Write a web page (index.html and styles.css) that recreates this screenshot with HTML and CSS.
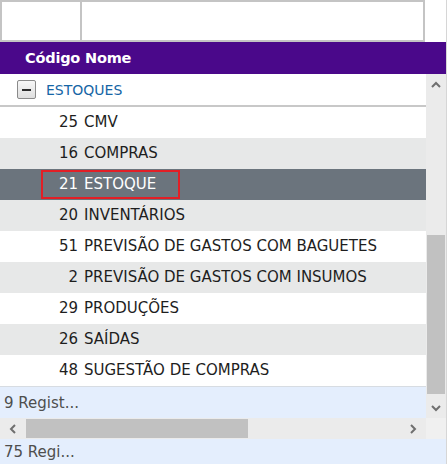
FILE: index.html
```html
<!DOCTYPE html>
<html lang="pt-BR">
<head>
    <meta charset="UTF-8">
    <title>Grupos de Produto</title>
    <link rel="stylesheet" href="styles.css">
</head>
<body>
    <div class="grid">
        <div class="filter-row">
            <div class="filter-cell code"></div>
            <div class="filter-cell name"></div>
        </div>
        <div class="header">Código Nome</div>

        <div class="middle">
            <div class="content">
                <div class="group-row">
                    <span class="toggle"><span class="dash"></span></span>
                    <span class="group-title">ESTOQUES</span>
                </div>
                <div class="row"><span class="code">25</span><span class="name">CMV</span></div>
                <div class="row alt"><span class="code">16</span><span class="name">COMPRAS</span></div>
                <div class="row selected"><span class="focus"><span class="code">21</span><span class="name">ESTOQUE</span></span></div>
                <div class="row alt"><span class="code">20</span><span class="name">INVENTÁRIOS</span></div>
                <div class="row"><span class="code">51</span><span class="name">PREVISÃO DE GASTOS COM BAGUETES</span></div>
                <div class="row alt"><span class="code">2</span><span class="name">PREVISÃO DE GASTOS COM INSUMOS</span></div>
                <div class="row"><span class="code">29</span><span class="name">PRODUÇÕES</span></div>
                <div class="row alt"><span class="code">26</span><span class="name">SAÍDAS</span></div>
                <div class="row"><span class="code">48</span><span class="name">SUGESTÃO DE COMPRAS</span></div>
                <div class="footer">9 Regist...</div>
            </div>
            <div class="vscroll">
                <div class="arrow">
                    <svg width="12" height="8" viewBox="0 0 12 8"><path d="M2 6 L6 2 L10 6" fill="none" stroke="#6f6f6f" stroke-width="2"/></svg>
                </div>
                <div class="track"><div class="thumb"></div></div>
                <div class="arrow">
                    <svg width="12" height="8" viewBox="0 0 12 8"><path d="M2 2 L6 6 L10 2" fill="none" stroke="#6f6f6f" stroke-width="2"/></svg>
                </div>
            </div>
        </div>

        <div class="hscroll-row">
            <div class="hscroll">
                <div class="harrow">
                    <svg width="8" height="12" viewBox="0 0 8 12"><path d="M6 2 L2 6 L6 10" fill="none" stroke="#6f6f6f" stroke-width="2"/></svg>
                </div>
                <div class="htrack"><div class="hthumb"></div></div>
                <div class="harrow">
                    <svg width="8" height="12" viewBox="0 0 8 12"><path d="M2 2 L6 6 L2 10" fill="none" stroke="#6f6f6f" stroke-width="2"/></svg>
                </div>
            </div>
            <div class="corner"></div>
        </div>
        <div class="footer total">75 Regi...</div>
    </div>
</body>
</html>
```

FILE: styles.css
```css
body { margin: 0; background: #fff; font-family: "DejaVu Sans", sans-serif; }

.grid { width: 447px; height: 464px; box-sizing: border-box; border-right: 1px solid #d6d6d6; display: flex; flex-direction: column; overflow: hidden; }

.filter-row { display: flex; height: 42px; }
.filter-cell { box-sizing: border-box; border: 2px solid #c4c4c4; border-right-width: 1px; border-left-width: 0; height: 42px; }
.filter-cell.code { width: 82px; border-left-width: 2px; border-right-width: 2px; }
.filter-cell.name { width: 343px; border-right-width: 2px; }

.header { height: 32px; background: #4a088a; color: #fff; font-size: 14.5px; font-weight: bold; line-height: 32px; padding-left: 25px; letter-spacing: -0.2px; }

.middle { display: flex; height: 344px; }
.content { flex: 1; display: flex; flex-direction: column; }

.group-row { height: 31px; border-bottom: 2px solid #c8c8c8; display: flex; align-items: center; padding-left: 17px; }
.toggle { width: 17px; height: 17px; border: 1px solid #8a8a8a; border-radius: 2px; background: linear-gradient(#f7f7f7, #dedede); display: flex; align-items: center; justify-content: center; }
.dash { width: 9px; height: 2px; background: #2b2b2b; }
.group-title { margin-left: 10px; color: #1666a6; font-size: 14px; }

.row { height: 31px; box-sizing: border-box; padding-bottom: 2px; display: flex; align-items: center; font-size: 15px; color: #1e1e1e; background: #fff; }
.row.alt { background: #e7e8e8; }
.row.selected { background: #6b747d; color: #fff; padding-bottom: 0; }
.row .code { width: 78px; text-align: right; box-sizing: border-box; }
.row .name { margin-left: 6px; white-space: nowrap; }
.focus { display: flex; align-items: center; box-sizing: border-box; width: 139px; height: 29px; padding-bottom: 2px; border: 2px solid #e21f26; margin-left: 41px; }
.focus .code { width: 35px; }

.footer { flex: 1; border-top: 1px solid #d7dce2; background: #e4eefd; color: #4e4e4e; font-size: 15px; display: flex; align-items: center; padding-left: 4px; }
.footer.total { flex: none; height: 25px; border-top: 0; }

.vscroll { width: 20px; background: #ebebeb; display: flex; flex-direction: column; }
.arrow { height: 21px; display: flex; align-items: center; justify-content: center; }
.track { flex: 1; display: flex; flex-direction: column; justify-content: flex-end; }
.thumb { height: 159px; background: #c1c1c1; margin: 0 1px 3px 1px; }

.hscroll-row { display: flex; height: 21px; }
.hscroll { width: 426px; display: flex; background: #ebebeb; }
.harrow { width: 26px; display: flex; align-items: center; justify-content: center; }
.htrack { flex: 1; padding: 1px 0; }
.hthumb { width: 222px; height: 19px; background: #c1c1c1; }
.corner { flex: 1; background: #f0f0f0; }
```
